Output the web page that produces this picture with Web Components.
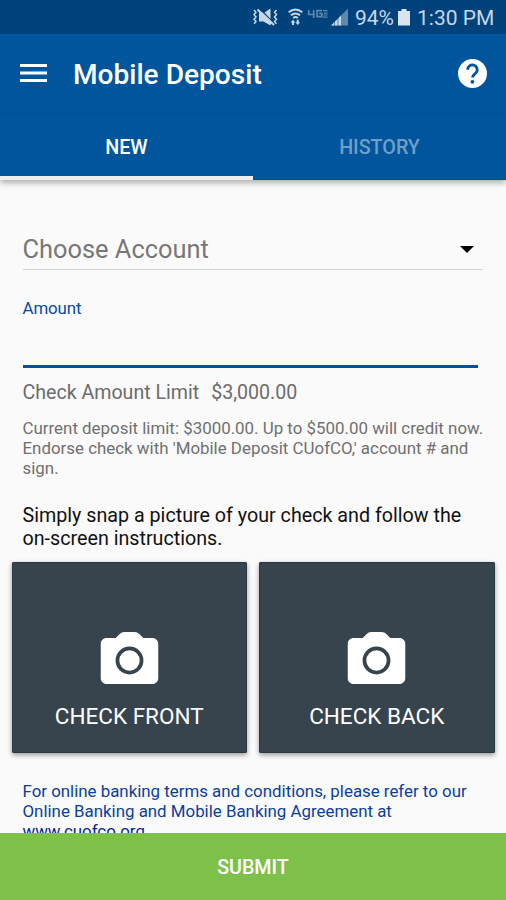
<!DOCTYPE html>
<html lang="en">
<head>
<meta charset="utf-8">
<title>Mobile Deposit</title>
<style>
html, body { margin: 0; height: 100%; }
body { font-family: Roboto, "Liberation Sans", sans-serif; background: #fafafa; overflow: hidden; }
</style>
</head>
<body>
<deposit-screen></deposit-screen>
<script>
const define = (name, markup) => {
  const template = document.createElement('template');
  template.innerHTML = markup;
  customElements.define(name, class extends HTMLElement {
    constructor() {
      super();
      this.attachShadow({ mode: 'open' }).append(template.content.cloneNode(true));
    }
  });
};

define('status-bar', `
<style>
:host { display: flex; align-items: center; justify-content: flex-end; height: 34px; background: #00427b; color: #c7d7e6; font-size: 21px; line-height: 34px; padding-right: 11px; box-sizing: border-box; white-space: nowrap; }
svg { display: block; flex: none; }
span { padding-top: 2px; line-height: 34px; }
.pct { width: 39px; margin-left: 7px; }
.time { width: 78px; margin-left: 7px; }
.bat { margin-left: 4px; }
</style>
<svg width="98" height="34" viewBox="250 0 98 34">
  <g fill="none" stroke="#c7d7e6" stroke-width="1.5">
    <path d="M254 10l2 2.300-2 2.300 2 2.300-2 2.300 2 2.300-2 2.300M276.500 10l-2 2.300 2 2.300-2 2.300 2 2.300-2 2.300 2 2.300"/>
  </g>
  <path fill="#c7d7e6" d="M258.500 12.500L271 24.500V21l-8.500-8.500zM259 13v8.500h4.500l7 4v-2zM264.500 12.500l6-4V19z"/>
  <path stroke="#c7d7e6" stroke-width="2" d="M257.500 9.500L274 25"/>
  <g fill="none" stroke="#c7d7e6" stroke-width="1.900">
    <path d="M288.700 12.300q6.800-5.800 13.600 0M290.900 15.300q4.600-3.800 9.200 0M293.200 18q2.300-1.800 4.600 0"/>
  </g>
  <path fill="#c7d7e6" d="M292 25v-2.500h-1.400l2.400-2.800 2.400 2.800H294V25zM296.700 19.700v2.500h-1.400l2.400 2.800 2.400-2.800h-1.400v-2.500z"/>
  <g fill="none" stroke="#5e89b0" stroke-width="1.700">
    <path d="M308.700 10v4.500h6M313.700 10v8M322 10.700h-5v6h4.800v-3.200H319"/>
    <path stroke-width="1.200" d="M323 10.700h4.500M324 13.200h3.500M323.500 15h4M323 17.200h4.500"/>
  </g>
  <path fill="#5e89b0" d="M348 8.500V25.500H331z"/>
  <path fill="#c7d7e6" d="M331 25.500l3-3v3zM335 21.500l2.500-2.500v6.500H335zM338.500 18l2.500-2.500v10h-2.500z"/>
</svg>
<span class="pct">94%</span>
<svg class="bat" width="12" height="34"><path fill="#d9e4ee" d="M3.500 9h5v2H12v14.500H0V11h3.500z"/></svg>
<span class="time">1:30 PM</span>`);

define('app-bar', `
<style>
:host { display: flex; align-items: center; height: 80px; padding: 0 19.500px 0 20px; box-sizing: border-box; background: #00559c; color: #fff; }
svg { display: block; flex: none; }
h1 { flex: 1; margin: 0 0 0 26px; font-size: 28.100px; font-weight: 500; line-height: 33px; white-space: nowrap; }
.menu { margin-top: -1px; }
.help { margin-top: -2px; }
</style>
<svg class="menu" width="27" height="20"><path fill="#fff" d="M0 0h27v3H0zM0 7.500h27v3H0zM0 15h27v3H0z"/></svg>
<h1><slot></slot></h1>
<svg class="help" width="29" height="29" viewBox="0 0 29 29"><circle cx="14.500" cy="14.500" r="14.500" fill="#fff"/><path d="M9.600 10.800a4.800 4.800 0 1 1 8.600 2.800c-1.500 1.600-3.700 2.300-3.700 5" fill="none" stroke="#00559c" stroke-width="2.800"/><circle cx="14.400" cy="22.800" r="1.900" fill="#00559c"/></svg>`);

define('tab-item', `
<style>
:host { display: flex; flex: 1; justify-content: center; box-sizing: border-box; height: 66px; padding-top: 22px; font-size: 19.700px; line-height: 23px; font-weight: 500; color: #729fc6; border-bottom: 1.500px solid #004a93; }
:host([selected]) { color: #fff; border-bottom: 4.500px solid #eee; }
</style><slot></slot>`);

define('tab-strip', `
<style>:host { display: flex; background: #00559c; box-shadow: 0 3px 6px rgba(0,0,0,.3); }</style><slot></slot>`);

define('account-select', `
<style>
:host { display: flex; align-items: center; justify-content: space-between; box-sizing: border-box; height: 43px; margin-right: -5px; padding: 2px 9.500px 0 0; border-bottom: 1.500px solid #d4d4d4; color: #777; font-size: 25.400px; line-height: 42px; }
svg { display: block; }
</style><slot></slot><svg width="14" height="7"><path d="M0 0h14L7 7z"/></svg>`);

define('amount-field', `
<style>
:host { display: block; box-sizing: border-box; height: 70px; border-bottom: 3px solid #04509c; color: #0a4a9c; font-size: 16.870px; line-height: 20px; letter-spacing: -.1px; }
</style><slot></slot>`);

define('capture-card', `
<style>
:host { display: flex; flex: 1; flex-direction: column; align-items: center; box-sizing: border-box; height: 191px; padding-top: 64px; background: #37444d; border-radius: 2px; color: #fff; font-size: 22.500px; line-height: 26px; box-shadow: 0 2px 5px rgba(0,0,0,.4), inset 0 0 0 1px #253c47; white-space: nowrap; }
svg { display: block; margin-bottom: 8px; }
</style>
<svg width="69" height="69" viewBox="0 0 24 24"><path fill="#fff" d="M10.200 2.100q-1 0-1.600.7L7.200 4.200H4c-1.100 0-2 .9-2 2v12c0 1.100.9 2 2 2h16c1.100 0 2-.9 2-2v-12c0-1.100-.9-2-2-2h-3.200l-1.400-1.400q-.6-.7-1.600-.7z"/><circle cx="12" cy="12" r="4.200" fill="none" stroke="#37444d" stroke-width="1.300"/></svg>
<slot></slot>`);

define('submit-button', `
<style>
:host { display: flex; flex: none; align-items: center; justify-content: center; box-sizing: border-box; height: 67.500px; padding-top: 2px; background: #7dc04a; color: #fff; font-size: 19.700px; font-weight: 500; }
</style><slot></slot>`);

define('deposit-screen', `
<style>
:host { display: flex; flex-direction: column; width: 506px; height: 900px; overflow: hidden; }
tab-strip { position: relative; }
main { flex: 1; min-height: 0; overflow: hidden; padding: 47px 28px 0 22.500px; }
p { margin: 0; white-space: nowrap; }
amount-field { margin-top: 27.500px; }
.limit { margin-top: 13.500px; font-size: 19.600px; line-height: 23px; color: #6c6c6c; display: flex; gap: 12px; }
.note { margin-top: 13.500px; font-size: 16.900px; line-height: 20px; color: #707070; }
.lead { margin-top: 26.500px; font-size: 19.700px; line-height: 23px; color: #111; }
.cards { display: flex; gap: 12px; margin: 12px -16.500px 0 -11px; }
.terms { margin-top: 29px; font-size: 16.870px; line-height: 19.800px; color: #0a3f9c; }
u { color: #0a1f9c; }
</style>
<status-bar></status-bar>
<app-bar>Mobile Deposit</app-bar>
<tab-strip><tab-item selected>NEW</tab-item><tab-item>HISTORY</tab-item></tab-strip>
<main>
<account-select>Choose Account</account-select>
<amount-field>Amount</amount-field>
<p class="limit"><span>Check Amount Limit</span><span>$3,000.00</span></p>
<p class="note">Current deposit limit: $3000.00. Up to $500.00 will credit now.<br>Endorse check with 'Mobile Deposit CUofCO,' account # and<br>sign.</p>
<p class="lead">Simply snap a picture of your check and follow the<br>on-screen instructions.</p>
<div class="cards"><capture-card>CHECK FRONT</capture-card><capture-card>CHECK BACK</capture-card></div>
<p class="terms">For online banking terms and conditions, please refer to our<br>Online Banking and Mobile Banking Agreement at<br><u>www.cuofco.org</u></p>
</main>
<submit-button>SUBMIT</submit-button>`);
</script>
</body>
</html>
